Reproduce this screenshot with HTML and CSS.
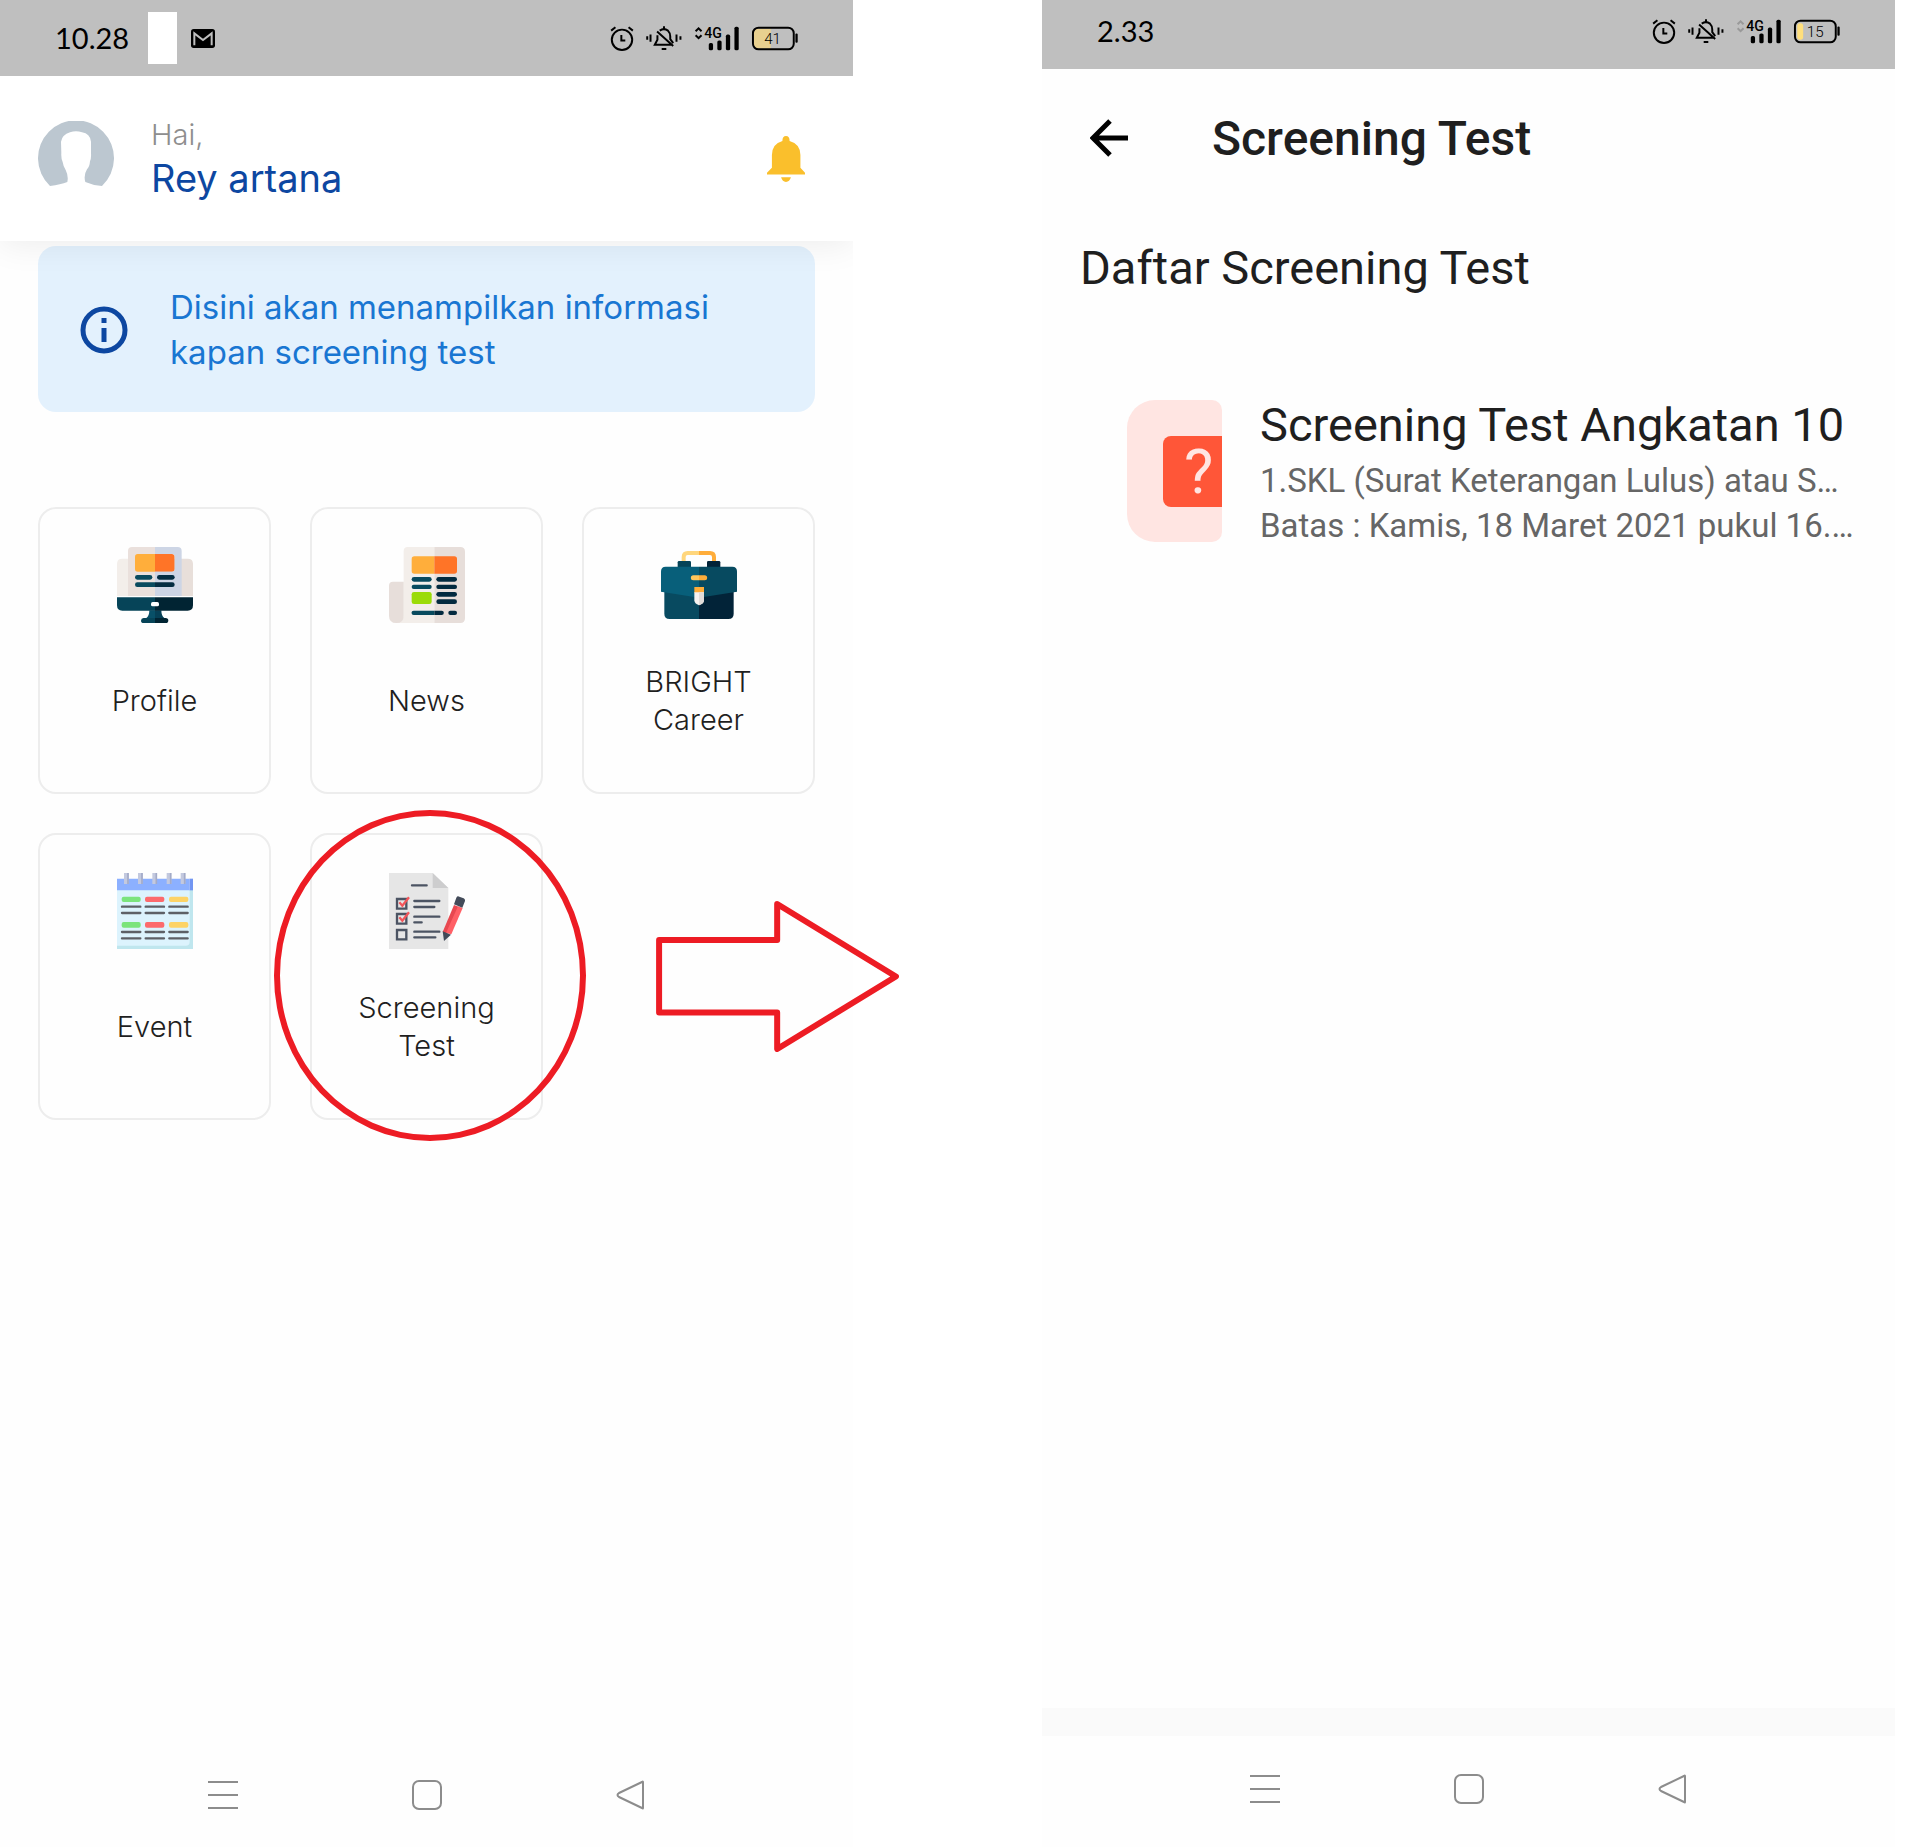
FILE: index.html
```
<!DOCTYPE html>
<html lang="id">
<head>
    <meta charset="UTF-8">
    <meta name="viewport" content="width=device-width, initial-scale=1.0">
    <title>Screening Test</title>
    <link rel="stylesheet" href="styles.css">
</head>
<body>

    <!-- shared icons -->
    <svg class="sprite" aria-hidden="true">
        <symbol id="alarm" viewBox="88 76 72 76">
            <g fill="none" stroke="#000" stroke-width="6">
                <circle cx="124" cy="118" r="31"/>
                <path d="M122 103v17h12M91 90l13-10M144 80l13 10"/>
            </g>
        </symbol>
        <symbol id="mute" viewBox="196 76 114 76">
            <path fill="none" stroke="#000" stroke-width="6" d="M202 107v11M212 102v22M291 102v22M303 107v11M253 77v8M240 90q13-9 25 0 7 7 7 18v8l9 12M233 104v14l-8 15h49M232 93l49 44M246 146h14"/>
        </symbol>
        <symbol id="nav-menu" viewBox="0 0 30 30">
            <path fill="none" stroke="#8c8c8c" stroke-width="2" d="M0 2h30M0 15h30M0 28h30"/>
        </symbol>
        <symbol id="nav-home" viewBox="0 0 30 30">
            <rect x="1" y="1" width="28" height="28" rx="6" fill="none" stroke="#8c8c8c" stroke-width="2"/>
        </symbol>
        <symbol id="nav-back" viewBox="0 0 30 30">
            <path fill="none" stroke="#8c8c8c" stroke-width="2" stroke-linejoin="round" d="M27 2v26q0 1-1 0L3 17q-3-2 0-4L26 2q1-1 1 0z"/>
        </symbol>
    </svg>

    <main class="screens">

        <!-- Home -->
        <section class="phone phone-home">
            <div class="status-bar">
                <span class="time">10.28</span>
                <span class="notice-blank"></span>
                <svg class="mail" viewBox="0 0 72 57">
                    <rect width="72" height="57" rx="8"/>
                    <path fill="none" stroke="#bfbfbf" stroke-width="6" d="M10 49V13l26 20 26-20v36"/>
                </svg>
                <div class="status-icons">
                    <svg class="i-alarm"><use href="#alarm"/></svg>
                    <svg class="i-mute"><use href="#mute"/></svg>
                    <svg class="i-signal" viewBox="340 76 138 76">
                        <path fill="none" stroke="#000" stroke-width="6" d="M344 92l9-9 9 9M344 104l9 9 9-9"/>
                        <text class="net" x="370" y="112">4G</text>
                        <rect x="384" y="128" width="13" height="22" rx="5"/>
                        <rect x="410" y="120" width="13" height="30" rx="5"/>
                        <rect x="436" y="102" width="13" height="48" rx="5"/>
                        <rect x="462" y="78" width="13" height="72" rx="5"/>
                    </svg>
                    <svg class="i-battery" viewBox="514 76 144 76">
                        <path fill="#e8d08f" d="M573 84v61h-38q-13 0-13-13V97q0-13 13-13z"/>
                        <rect x="519" y="81" width="124" height="66" rx="17" fill="none" stroke="#000" stroke-width="6"/>
                        <rect x="648" y="99" width="7" height="28" rx="3"/>
                        <text class="level" x="553" y="130">41</text>
                    </svg>
                </div>
            </div>

            <header class="user-header">
                <svg class="avatar" viewBox="0 0 228 228">
                    <path fill="#bcc7d0" d="M36 195A114 114 0 1 1 192 195q-28-2-50-12-6-20 5-38 8-8 9-24 4-8 3-24V62Q156 38 132 34q-18-6-36 0Q72 42 69 62l1 35q-1 16 4 26 2 14 9 24 9 18 5 36-20 8-52 12z"/>
                </svg>
                <div class="greeting">
                    <p class="hai">Hai,</p>
                    <p class="name">Rey artana</p>
                </div>
                <button class="icon-btn" type="button" aria-label="Notifikasi">
                    <svg class="bell" viewBox="0 0 116 140">
                        <path fill="#fabf2c" d="M0 117v-5l15-15V58q0-34 32-43 0-15 11-15t11 15q33 9 33 43v39l14 15v5zM43 126h30q-4 14-15 14t-15-14z"/>
                    </svg>
                </button>
            </header>

            <div class="info-banner">
                <svg class="info" viewBox="0 0 48 48">
                    <circle cx="24" cy="24" r="21" fill="none" stroke="#0d47a1" stroke-width="5"/>
                    <path stroke="#0d47a1" stroke-width="5" d="M24 12v5M24 22v14"/>
                </svg>
                <p>Disini akan menampilkan informasi<br>kapan screening test</p>
            </div>

            <nav class="menu">
                <a class="card" href="#">
                    <svg class="card-icon" viewBox="0 0 228 228">
                        <path fill="#f3eeea" d="M16 35h98v112H0V51q0-16 16-16z"/>
                        <path fill="#e8dfda" d="M114 35h98q16 0 16 16v96H114z"/>
                        <path fill="#eae0dc" d="M45 0h69v147H33V12Q33 0 45 0z"/>
                        <path fill="#cdd5e5" d="M114 0h36q12 0 12 12v135h-48z"/>
                        <path fill="#ffae3b" d="M62 21h52v53H62q-8 0-8-8V29q0-8 8-8z"/>
                        <path fill="#ff7427" d="M114 21h51q8 0 8 8v37q0 8-8 8h-51z"/>
                        <path fill="#cdd5e5" d="M114 0h68q12 0 12 12v135h-80V74h51q8 0 8-8V29q0-8-8-8h-51z"/>
                        <rect x="54" y="84" width="52" height="14" rx="7" fill="#084a5e"/>
                        <rect x="120" y="84" width="53" height="14" rx="7" fill="#042d42"/>
                        <path fill="#084a5e" d="M61 106h53v14H61a7 7 0 0 1 0-14z"/>
                        <path fill="#042d42" d="M114 106h52a7 7 0 0 1 0 14h-52z"/>
                        <path fill="#085068" d="M97 190h17v23H88q9-6 9-23z"/>
                        <path fill="#064056" d="M114 190h19q0 17 9 23h-28z"/>
                        <path fill="#064458" d="M0 151h114v40H16q-16 0-16-16zM80 213h34v15H80q-8 0-8-7t8-8z"/>
                        <path fill="#012433" d="M114 151h114v24q0 16-16 16h-98zM114 213h32q8 0 8 8t-8 7h-32z"/>
                        <rect x="102" y="165" width="24" height="13" rx="5" fill="#fff"/>
                    </svg>
                    <span>Profile</span>
                </a>

                <a class="card" href="#">
                    <svg class="card-icon" viewBox="0 0 228 228">
                        <path fill="#f3eeea" d="M56 0h80v228H22l22-20V12Q44 0 56 0z"/>
                        <path fill="#e7deda" d="M136 0h78q14 0 14 14v200q0 14-14 14h-78zM12 104h32v102q0 22-22 22T0 206v-90q0-12 12-12z"/>
                        <path fill="#ffae3b" d="M76 28h60v52H76q-8 0-8-8V36q0-8 8-8z"/>
                        <path fill="#ff7427" d="M136 28h60q8 0 8 8v36q0 8-8 8h-60z"/>
                        <g fill="#084a5e">
                            <rect x="68" y="90" width="60" height="14" rx="7"/>
                            <rect x="68" y="113" width="60" height="13" rx="6"/>
                            <path d="M74 191h62v13H74a6 6 0 0 1 0-13z"/>
                        </g>
                        <rect x="68" y="135" width="60" height="36" rx="7" fill="#9bdb08"/>
                        <g fill="#022a3f">
                            <rect x="142" y="90" width="62" height="14" rx="7"/>
                            <rect x="142" y="113" width="62" height="13" rx="6"/>
                            <rect x="142" y="135" width="62" height="14" rx="7"/>
                            <rect x="142" y="157" width="62" height="14" rx="7"/>
                            <path d="M136 191h22a6 6 0 0 1 0 13h-22z"/>
                            <rect x="178" y="191" width="26" height="13" rx="6"/>
                        </g>
                    </svg>
                    <span>News</span>
                </a>

                <a class="card" href="#">
                    <svg class="card-icon" viewBox="0 0 228 228">
                        <path fill="none" stroke="#ffd67c" stroke-width="12" d="M68 46V30q0-12 12-12h34"/>
                        <path fill="none" stroke="#ffad3a" stroke-width="12" d="M114 18h33q12 0 12 12v16"/>
                        <rect x="50" y="42" width="40" height="24" rx="4" fill="#064458"/>
                        <rect x="138" y="42" width="40" height="24" rx="4" fill="#022338"/>
                        <path fill="#084a60" d="M10 128h104v88H26q-16 0-16-16z"/>
                        <path fill="#022338" d="M114 128h104v72q0 16-16 16h-88z"/>
                        <path fill="#085f7a" d="M14 59h100v93L0 134V73q0-14 14-14z"/>
                        <path fill="#074a60" d="M114 59h100q14 0 14 14v61l-114 18z"/>
                        <path fill="#ffc65c" d="M97 85h17v15H97a7 7 0 0 1 0-15z"/>
                        <path fill="#ffad3a" d="M114 85h17a7 7 0 0 1 0 15h-17zM100 120h29v18h-29z"/>
                        <path fill="#f7f3f0" d="M100 136h29v24q0 10-15 15-14-5-14-15z"/>
                        <path fill="#e2dcd9" d="M114 136h15v24q0 10-15 15z"/>
                    </svg>
                    <span>BRIGHT<br>Career</span>
                </a>

                <a class="card" href="#">
                    <svg class="card-icon" viewBox="0 0 228 228">
                        <path fill="#bfe6ee" d="M0 51h228v177H0z"/>
                        <path fill="#dcf3fd" d="M0 51h218v155q0 12-12 12H0z"/>
                        <path fill="#8cb0ff" d="M0 17h218v35H0z"/>
                        <path fill="#7296f2" d="M218 17h10v35h-10z"/>
                        <path stroke="#c3c9df" stroke-width="14" d="M28 0v33M70 0v33M113 0v33M156 0v33M198 0v33"/>
                        <path stroke="#a3abc8" stroke-width="5" d="M33 0v33M75 0v33M118 0v33M161 0v33M203 0v33"/>
                        <g fill="#7be47c">
                            <rect x="14" y="71" width="57" height="16" rx="6"/>
                            <rect x="14" y="147" width="57" height="17" rx="6"/>
                        </g>
                        <g fill="#fc6a6c">
                            <rect x="84" y="71" width="58" height="16" rx="6"/>
                            <rect x="84" y="147" width="58" height="17" rx="6"/>
                        </g>
                        <g fill="#fdd365">
                            <rect x="156" y="71" width="58" height="16" rx="6"/>
                            <rect x="156" y="147" width="58" height="17" rx="6"/>
                        </g>
                        <path stroke="#5d6066" stroke-width="7" stroke-linecap="round" d="M15 101h55M86 101h55M157 101h55M15 120h55M86 120h55M157 120h55M15 177h55M86 177h55M157 177h55M15 196h55M86 196h55M157 196h55"/>
                    </svg>
                    <span>Event</span>
                </a>

                <a class="card card-marked" href="#">
                    <svg class="card-icon" viewBox="0 0 228 228">
                        <path fill="#e6e6e6" d="M0 0h131l47 45v183H0z"/>
                        <path fill="#cdcdce" d="M131 0l47 45h-47z"/>
                        <path fill="none" stroke="#4c5463" stroke-width="7" stroke-linecap="round" d="M69 37h44M76 84h75M76 102h60M76 131h75M76 148h22M76 176h75M76 193h63"/>
                        <path fill="none" stroke="#4c5463" stroke-width="7" d="M24 78h28v29H24zM24 123h28v29H24zM24 171h28v28H24z"/>
                        <path fill="none" stroke="#f2555a" stroke-width="7" d="M31 88l9 10 20-25M31 133l9 10 20-25"/>
                        <path fill="#e84850" d="M195 96l14 5-36 83-12-7z"/>
                        <path fill="#ff6066" d="M207 100l14 5-34 79-16-4z"/>
                        <path fill="#434b59" d="M202 74q3-6 9-3l13 5q5 3 4 8l-8 20-25-10zM161 175l25 10-21 19z"/>
                    </svg>
                    <span>Screening<br>Test</span>
                </a>

                <div class="pointer">
                    <svg class="pointer-arrow" viewBox="74 63 730 454">
                        <path fill="none" stroke="#ed1c24" stroke-width="18" stroke-linejoin="round" d="M83 180h355V72l357 218-357 218V398H83z"/>
                    </svg>
                </div>
            </nav>

            <div class="nav-bar">
                <button class="icon-btn" type="button" aria-label="Menu"><svg class="nav-icon"><use href="#nav-menu"/></svg></button>
                <button class="icon-btn" type="button" aria-label="Home"><svg class="nav-icon"><use href="#nav-home"/></svg></button>
                <button class="icon-btn" type="button" aria-label="Back"><svg class="nav-icon"><use href="#nav-back"/></svg></button>
            </div>
        </section>

        <!-- Screening test list -->
        <section class="phone phone-list">
            <div class="status-bar">
                <span class="time">2.33</span>
                <div class="status-icons">
                    <svg class="i-alarm"><use href="#alarm"/></svg>
                    <svg class="i-mute"><use href="#mute"/></svg>
                    <svg class="i-signal" viewBox="340 76 138 76">
                        <path fill="none" stroke="#999" stroke-width="6" d="M344 92l9-9 9 9M344 104l9 9 9-9"/>
                        <text class="net" x="370" y="112">4G</text>
                        <rect x="384" y="128" width="13" height="22" rx="5"/>
                        <rect x="410" y="120" width="13" height="30" rx="5"/>
                        <rect x="436" y="102" width="13" height="48" rx="5"/>
                        <rect x="462" y="78" width="13" height="72" rx="5"/>
                    </svg>
                    <svg class="i-battery" viewBox="514 76 144 76">
                        <rect x="526" y="89" width="18" height="50" rx="8" fill="#ffdf7c"/>
                        <rect x="519" y="81" width="124" height="66" rx="17" fill="none" stroke="#000" stroke-width="6"/>
                        <rect x="648" y="99" width="7" height="28" rx="3"/>
                        <text class="level" x="555" y="130">15</text>
                    </svg>
                </div>
            </div>

            <header class="app-bar">
                <button class="icon-btn" type="button" aria-label="Kembali">
                    <svg class="arrow-back" viewBox="0 0 38 38">
                        <path fill="none" stroke="#000" stroke-width="5" d="M38 19H4M20 2L3 19l17 17"/>
                    </svg>
                </button>
                <h1>Screening Test</h1>
            </header>

            <h2 class="list-title">Daftar Screening Test</h2>

            <a class="test-item" href="#">
                <span class="test-icon"><span class="test-icon-mark">?</span></span>
                <span class="test-text">
                    <span class="test-name">Screening Test Angkatan 10</span>
                    <span class="test-info">1.SKL (Surat Keterangan Lulus) atau S…</span>
                    <span class="test-info">Batas : Kamis, 18 Maret 2021 pukul 16.…</span>
                </span>
            </a>

            <div class="bottom-strip"></div>
            <div class="nav-bar">
                <button class="icon-btn" type="button" aria-label="Menu"><svg class="nav-icon"><use href="#nav-menu"/></svg></button>
                <button class="icon-btn" type="button" aria-label="Home"><svg class="nav-icon"><use href="#nav-home"/></svg></button>
                <button class="icon-btn" type="button" aria-label="Back"><svg class="nav-icon"><use href="#nav-back"/></svg></button>
            </div>
        </section>

    </main>

</body>
</html>
```
FILE: styles.css
```
* {
    box-sizing: border-box;
}
body {
    margin: 0;
    background-color: #fff;
    color: #1f1f1f;
    font-family: Inter, "Liberation Sans", sans-serif;
}
p, h1, h2 {
    margin: 0;
    font-weight: 400;
}
a {
    color: inherit;
    text-decoration: none;
}
svg {
    display: block;
    flex-shrink: 0;
}
.sprite {
    display: none;
}
.icon-btn {
    padding: 0;
    border: 0;
    background: none;
    cursor: pointer;
}

/* two phones side by side */
.screens {
    display: grid;
    grid-template-columns: 853fr 853fr;
    column-gap: 189px;
    padding-right: 25px;
    min-height: 100vh;
}
.phone {
    display: flex;
    flex-direction: column;
    min-width: 0;
    background-color: #fefefe;
}
.phone-list {
    font-family: Roboto, "Liberation Sans", sans-serif;
}

/* status bar */
.status-bar {
    display: flex;
    align-items: center;
    height: 76px;
    padding: 0 54px 0 55px;
    background-color: #bfbfbf;
}
.phone-list .status-bar {
    height: 69px;
    padding-bottom: 6px;
}
.time {
    padding-bottom: 2px;
    font-family: Lato, "Liberation Sans", sans-serif;
    font-size: 29px;
    color: #000;
}
.notice-blank {
    width: 29px;
    height: 52px;
    margin: 0 14px 0 19px;
    background-color: #fff;
}
.mail {
    width: 24px;
    height: 19px;
}
.status-icons {
    display: flex;
    gap: 11px;
    margin-left: auto;
}
.status-icons svg {
    height: 25px;
}
.i-alarm {
    width: 24px;
}
.i-mute {
    width: 38px;
}
.i-signal {
    width: 46px;
}
.i-battery {
    width: 48px;
}
.net {
    font: 500 43px Roboto, sans-serif;
}
.level {
    font: 300 46px Roboto, sans-serif;
}

/* user header */
.user-header {
    position: relative;
    z-index: 1;
    display: flex;
    align-items: center;
    height: 165px;
    padding: 0 48px 0 38px;
    background-color: #fff;
    box-shadow: 0 4px 32px rgba(0, 0, 0, 0.07);
    clip-path: inset(0 0 -48px 0);
}
.avatar {
    width: 76px;
    height: 76px;
}
.greeting {
    flex: 1;
    padding-left: 37px;
}
.hai {
    font-size: 29px;
    font-weight: 300;
    line-height: 38px;
    color: #8e8e8e;
}
.name {
    font-size: 38px;
    line-height: 48px;
    color: #0d47a1;
}
.bell {
    width: 38px;
    height: 46px;
}

/* info banner */
.info-banner {
    display: flex;
    align-items: center;
    gap: 42px;
    margin: 5px 38px 0;
    padding: 39px 42px 37px;
    border-radius: 18px;
    background-color: #e3f1fd;
    color: #1976d2;
    font-size: 33px;
    line-height: 45px;
}
.info {
    width: 48px;
    height: 48px;
}

/* menu cards */
.menu {
    display: grid;
    grid-template-columns: repeat(3, 1fr);
    gap: 39px;
    padding: 95px 38px 0;
}
.card {
    position: relative;
    display: flex;
    flex-direction: column;
    align-items: center;
    height: 287px;
    padding: 38px 0;
    border: 2px solid #ededed;
    border-radius: 18px;
}
.card-icon {
    width: 76px;
    height: 76px;
    margin-bottom: 24px;
}
.card span {
    display: flex;
    flex: 1;
    align-items: center;
    font-size: 29px;
    font-weight: 300;
    line-height: 38px;
    text-align: center;
}
/* red ring over the marked card */
.card-marked::after {
    content: "";
    position: absolute;
    inset: -25px -45px -23px -38px;
    border: 6px solid #ed1c24;
    border-radius: 50%;
}
.pointer {
    position: relative;
}
.pointer-arrow {
    position: absolute;
    top: 68px;
    left: 74px;
    z-index: 2;
    width: 243px;
    height: 151px;
}

/* system navigation */
.nav-bar {
    display: flex;
    align-items: center;
    justify-content: center;
    gap: 174px;
    height: 104px;
    margin-top: auto;
}
.nav-icon {
    width: 30px;
    height: 30px;
}
.bottom-strip {
    height: 28px;
    margin-top: auto;
    background-color: #fafafa;
}
.phone-list .nav-bar {
    height: 111px;
    margin-top: 0;
    padding-bottom: 6px;
}

/* screening test list */
.app-bar {
    display: flex;
    align-items: center;
    gap: 84px;
    height: 138px;
    padding: 0 48px;
}
.arrow-back {
    width: 38px;
    height: 38px;
}
.app-bar h1 {
    font-size: 48px;
    font-weight: 500;
}
.list-title {
    padding: 32px 38px 0;
    font-size: 47px;
    line-height: 58px;
}
.test-item {
    display: flex;
    gap: 38px;
    padding: 103px 0 0 85px;
}
.test-icon {
    display: flex;
    flex-shrink: 0;
    align-items: center;
    justify-content: flex-end;
    width: 95px;
    height: 142px;
    border-radius: 28px 10px 10px 28px;
    background-color: #ffe5e2;
}
.test-icon-mark {
    width: 59px;
    height: 71px;
    padding-left: 21px;
    border-radius: 8px 0 0 8px;
    background-color: #ff5638;
    color: #ffe5e2;
    font-size: 62px;
    line-height: 71px;
}
.test-text {
    display: flex;
    flex-direction: column;
    white-space: nowrap;
}
.test-name {
    margin-bottom: 8px;
    font-size: 47px;
    line-height: 50px;
}
.test-info {
    font-size: 33px;
    line-height: 45px;
    color: #666;
}
```
